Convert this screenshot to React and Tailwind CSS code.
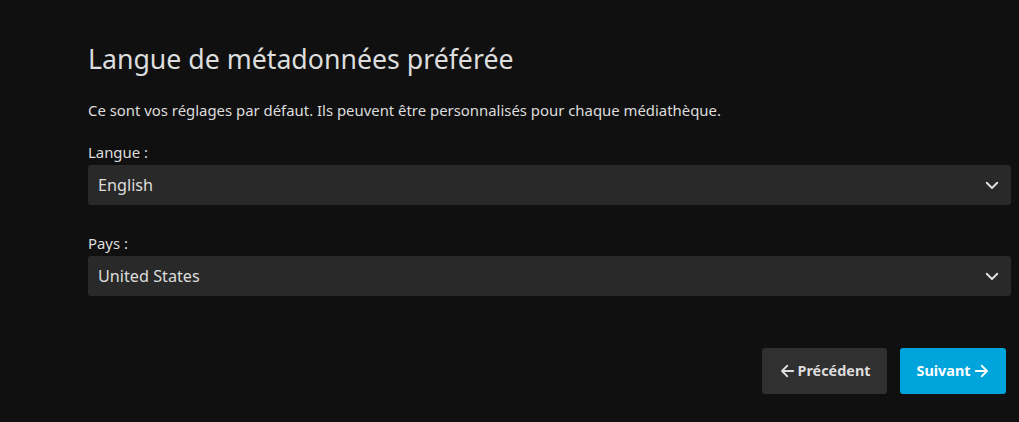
export default function App() {
  const Chevron = () => (
    <svg width="18" height="18" viewBox="0 0 24 24" fill="none" stroke="currentColor" strokeWidth="2.6" strokeLinecap="round" strokeLinejoin="round">
      <path d="M5 9l7 7 7-7" />
    </svg>
  );
  const Arrow = ({ dir }) => (
    <svg width="18" height="18" viewBox="0 0 24 24" fill="none" stroke="currentColor" strokeWidth="2.4" strokeLinecap="round" strokeLinejoin="round">
      {dir === "left" ? (
        <path d="M19 12H5M11 5l-7 7 7 7" />
      ) : (
        <path d="M5 12h14M13 5l7 7-7 7" />
      )}
    </svg>
  );
  return (
    <div className="w-[1019px] h-[422px] bg-[#101010] text-[#dddddd] overflow-hidden" style={{ fontFamily: '"Noto Sans", sans-serif' }}>
      <div className="pl-[88px] pr-[8px] pt-[37px]">
        <h1 className="text-[26.7px] leading-[44px] font-normal">Langue de métadonnées préférée</h1>
        <p className="text-[14.9px] leading-[20px] mt-[19px]">Ce sont vos réglages par défaut. Ils peuvent être personnalisés pour chaque médiathèque.</p>
        <div className="mt-[22px]">
          <label className="block text-[14.9px] leading-[20px] mb-[3px]">Langue :</label>
          <div className="h-[40px] bg-[#292929] rounded-[3px] flex items-center justify-between pl-[10px] pr-[10px] text-[16.2px]">
            <span>English</span>
            <Chevron />
          </div>
        </div>
        <div className="mt-[28px]">
          <label className="block text-[14.9px] leading-[20px] mb-[3px]">Pays :</label>
          <div className="h-[40px] bg-[#292929] rounded-[3px] flex items-center justify-between pl-[10px] pr-[10px] text-[16.2px]">
            <span>United States</span>
            <Chevron />
          </div>
        </div>
        <div className="flex justify-end gap-[13px] mt-[52px] pr-[5px]">
          <button className="h-[46px] w-[125px] bg-[#303030] rounded-[3px] flex items-center justify-center gap-[1px] text-[14.4px] font-bold text-[#dddddd]">
            <Arrow dir="left" />
            <span>Précédent</span>
          </button>
          <button className="h-[46px] w-[106px] bg-[#00a4dc] rounded-[3px] flex items-center justify-center gap-[1px] text-[14.4px] font-bold text-white">
            <span>Suivant</span>
            <Arrow dir="right" />
          </button>
        </div>
      </div>
    </div>
  );
}
